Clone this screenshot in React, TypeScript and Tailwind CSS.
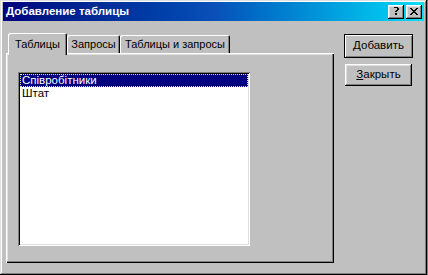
import React from "react";

const raised =
  "shadow-[inset_-1px_-1px_#000,inset_1px_1px_#fff,inset_-2px_-2px_#808080,inset_2px_2px_#dfdfdf]";

function TitleButton({ children }: { children: React.ReactNode }) {
  return (
    <div
      className={`w-[16px] h-[14px] bg-[#c0c0c0] ${raised} flex items-center justify-center text-black font-bold text-[11px] leading-none`}
    >
      {children}
    </div>
  );
}

const tabShadow =
  "shadow-[inset_1px_1px_#fff,inset_-1px_0_#000,inset_-2px_0_#808080]";

export default function App() {
  return (
    <div
      className="w-[428px] h-[275px] bg-[#808080] flex"
      style={{ fontFamily: '"Liberation Sans", Arial, sans-serif' }}
    >
      <div className="w-[427px] h-[275px] bg-[#c0c0c0] shadow-[inset_-1px_-1px_#000,inset_1px_1px_#dfdfdf,inset_-2px_-2px_#808080,inset_2px_2px_#fff] flex flex-col px-[3px] pt-[2px] pb-[3px]">
        {/* Title bar */}
        <div className="h-[19px] flex items-center bg-gradient-to-r from-[#00007c] via-[#0b4fb8] to-[#10dcf8] pl-[3px] pr-[2px]">
          <span className="text-white font-bold text-[11.5px] leading-none flex-1">
            Добавление таблицы
          </span>
          <div className="flex gap-[2px]">
            <TitleButton>
              <svg width="8" height="9" viewBox="0 0 8 9" shapeRendering="crispEdges">
                <path d="M1 1h1v-1h4v1h1v2h-1v1h-1v1h-2v-1h1v-1h1v-2h-4v1h-1z M3 6h2v2h-2z" fill="#000" />
              </svg>
            </TitleButton>
            <TitleButton>
              <svg width="8" height="7" viewBox="0 0 8 7" shapeRendering="crispEdges">
                <path d="M0 0h2v1h1v1h2v-1h1v-1h2v1h-1v1h-1v1h-1v1h1v1h1v1h1v1h-2v-1h-1v-1h-2v1h-1v1h-2v-1h1v-1h1v-1h1v-1h-1v-1h-1v-1h-1z" fill="#000" />
              </svg>
            </TitleButton>
          </div>
        </div>

        <div className="flex flex-1">
          {/* Tab control */}
          <div className="ml-[3px] mt-[12px] w-[328px] flex flex-col">
            <div className="h-[20px] flex items-end pl-[2px] text-[11px] text-black">
              <div className={`relative z-10 h-[22px] -mb-[2px] w-[59px] bg-[#c0c0c0] rounded-t-[2px] ${tabShadow} flex items-start justify-center pt-[6px] leading-none`}>
                Таблицы
              </div>
              <div className={`h-[18px] w-[53px] bg-[#c0c0c0] rounded-t-[2px] ${tabShadow} flex items-start justify-center pt-[4px] leading-none`}>
                Запросы
              </div>
              <div className={`h-[18px] w-[110px] bg-[#c0c0c0] rounded-t-[2px] ${tabShadow} flex items-start justify-center pt-[4px] leading-none`}>
                Таблицы и запросы
              </div>
            </div>
            <div className="h-[210px] bg-[#c0c0c0] shadow-[inset_1px_1px_#fff,inset_-1px_-1px_#000,inset_-2px_-2px_#808080,inset_2px_2px_#dfdfdf] pl-[12px] pt-[19px]">
              <div className="w-[232px] h-[174px] bg-white shadow-[inset_1px_1px_#808080,inset_-1px_-1px_#fff,inset_2px_2px_#000,inset_-2px_-2px_#dfdfdf] p-[2px] text-[11.5px] leading-[13px] text-black">
                <div className="h-[13px] bg-[#000080] text-white border border-dotted border-[#e8e8a0] pl-[1px] leading-[11px]">
                  Співробітники
                </div>
                <div className="h-[13px] pl-[2px]">Штат</div>
              </div>
            </div>
          </div>

          {/* Buttons */}
          <div className="ml-[10px] mt-[13px] flex flex-col gap-[6px] text-[11.5px] text-black">
            <div className="w-[69px] h-[24px] border border-black bg-[#c0c0c0] shadow-[inset_1px_1px_#fff,inset_-1px_-1px_#808080] flex items-center justify-center leading-none">
              <span>
                <span className="underline">Д</span>обавить
              </span>
            </div>
            <div className={`ml-[1px] w-[67px] h-[22px] bg-[#c0c0c0] ${raised} flex items-center justify-center leading-none`}>
              <span>
                <span className="underline">З</span>акрыть
              </span>
            </div>
          </div>
        </div>
      </div>
    </div>
  );
}
